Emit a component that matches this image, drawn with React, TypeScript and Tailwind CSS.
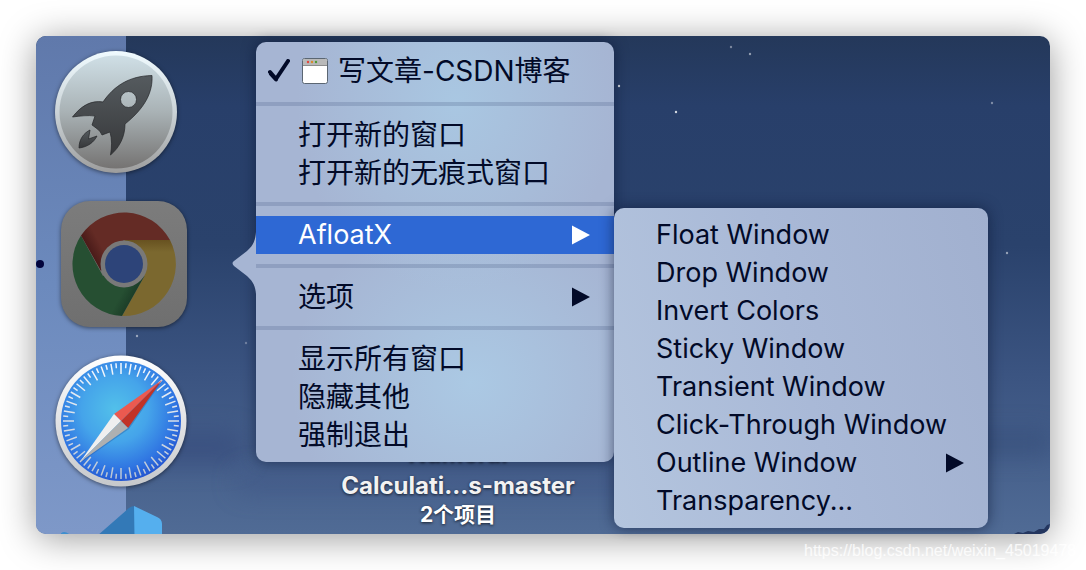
import type { ReactNode } from "react";

type Item = { label: string; submenu?: boolean; active?: boolean };

const groups: Item[][] = [
  [{ label: "打开新的窗口" }, { label: "打开新的无痕式窗口" }],
  [{ label: "AfloatX", submenu: true, active: true }],
  [{ label: "选项", submenu: true }],
  [{ label: "显示所有窗口" }, { label: "隐藏其他" }, { label: "强制退出" }],
];

const afloatItems: Item[] = [
  { label: "Float Window" },
  { label: "Drop Window" },
  { label: "Invert Colors" },
  { label: "Sticky Window" },
  { label: "Transient Window" },
  { label: "Click-Through Window" },
  { label: "Outline Window", submenu: true },
  { label: "Transparency..." },
];

function MenuItem({ label, submenu, active }: Item) {
  return (
    <button
      type="button"
      role="menuitem"
      aria-haspopup={submenu ? "menu" : undefined}
      className={
        "flex h-[38px] w-full items-center justify-between pl-[42px] pr-6 text-left whitespace-nowrap " +
        (active ? "bg-[#2e68d4] text-[27px] text-white" : "text-[#020a28]")
      }
    >
      {label}
      {submenu && (
        <svg viewBox="0 0 18 20" className="h-5 w-[18px]" fill="currentColor" aria-hidden="true">
          <path d="M0 .5 18 10 0 19.5Z" />
        </svg>
      )}
    </button>
  );
}

function Separator() {
  return <div role="separator" className="my-[10px] h-1 bg-[#4b6088]/25" />;
}

function DockItem({ label, className, children }: { label: string; className: string; children: ReactNode }) {
  return (
    <button type="button" aria-label={label} className={"block shrink-0 " + className}>
      {children}
    </button>
  );
}

function LaunchpadIcon() {
  return (
    <svg viewBox="0 0 124 124" className="size-[124px] drop-shadow-[0_1px_2px_rgba(0,0,0,0.5)]" aria-hidden="true">
      <defs>
        <linearGradient id="lpRim" x1="0" y1="0" x2="0" y2="1">
          <stop offset="0" stopColor="#f0fbff" />
          <stop offset=".5" stopColor="#cbd3d7" />
          <stop offset="1" stopColor="#9d9d9d" />
        </linearGradient>
        <linearGradient id="lpFace" x1="0" y1="0" x2="0" y2="1">
          <stop offset="0" stopColor="#cfdfe6" />
          <stop offset=".5" stopColor="#a9b2b5" />
          <stop offset="1" stopColor="#757372" />
        </linearGradient>
        <linearGradient id="lpRocket" x1="0" y1="0" x2="0" y2="1">
          <stop offset="0" stopColor="#555b5f" />
          <stop offset="1" stopColor="#37383a" />
        </linearGradient>
      </defs>
      <circle cx="62" cy="62" r="61" fill="url(#lpRim)" />
      <circle cx="62" cy="62" r="56.500" fill="url(#lpFace)" />
      <path
        fill="url(#lpRocket)"
        fillRule="evenodd"
        stroke="#252629"
        strokeWidth=".7"
        strokeLinejoin="round"
        d="M98 25.500C99 42 91 58 71 74C71 86 66 97 56.500 105C58 97 58 89 56 82L48 85C46 80 42 78 38 75L41 66C34 65 26 66 18.500 67C27 56 37 50 49 52C60 36 75 26 98 25.500ZM74.500 41.500A8 8 0 1 0 74.500 57.500A8 8 0 1 0 74.500 41.500Z"
      />
      <path fill="url(#lpRocket)" stroke="#252629" strokeWidth=".7" d="M36 80C30 83 25 89 25 98C34 97 40 92 43 86L34.500 89Z" />
    </svg>
  );
}

function ChromeIcon() {
  return (
    <svg viewBox="0 0 126 126" className="size-[126px] drop-shadow-[0_1px_2px_rgba(0,0,0,0.5)]" aria-hidden="true">
      <defs>
        <linearGradient id="crTile" x1="0" y1="0" x2="0" y2="1">
          <stop offset="0" stopColor="#7c7c7c" />
          <stop offset="1" stopColor="#6f6f6f" />
        </linearGradient>
        <linearGradient id="crRed" gradientUnits="userSpaceOnUse" x1="31" y1="54" x2="42" y2="48">
          <stop offset="0" stopColor="#4a1b19" />
          <stop offset="1" stopColor="#642b25" />
        </linearGradient>
        <linearGradient id="crYellow" gradientUnits="userSpaceOnUse" x1="86" y1="38" x2="86" y2="51">
          <stop offset="0" stopColor="#66501f" />
          <stop offset="1" stopColor="#7b682f" />
        </linearGradient>
        <linearGradient id="crGreen" gradientUnits="userSpaceOnUse" x1="73" y1="96" x2="62" y2="90">
          <stop offset="0" stopColor="#1b3c27" />
          <stop offset="1" stopColor="#264f32" />
        </linearGradient>
      </defs>
      <rect width="126" height="126" rx="29" fill="url(#crTile)" />
      <path d="M63 39H109A52 52 0 0 1 61 115L83.500 75Z" fill="url(#crYellow)" />
      <path d="M20 34.500A52 52 0 0 0 61 115L83.500 75L63 63L42 75Z" fill="url(#crGreen)" />
      <path d="M20 34.500A52 52 0 0 1 109 39H63L40 70Z" fill="url(#crRed)" />
      <circle cx="63" cy="63" r="23.500" fill="#797979" />
      <circle cx="63" cy="63" r="19" fill="#2d4479" />
    </svg>
  );
}

function SafariIcon() {
  const ticks = Array.from({ length: 72 }, (_, i) => i);
  return (
    <svg viewBox="0 0 132 132" className="size-[132px] drop-shadow-[0_1px_2px_rgba(0,0,0,0.5)]" aria-hidden="true">
      <defs>
        <linearGradient id="sfRim" x1="0" y1="0" x2="0" y2="1">
          <stop offset="0" stopColor="#ffffff" />
          <stop offset="1" stopColor="#c6c8cb" />
        </linearGradient>
        <radialGradient id="sfFace" cx=".45" cy=".4" r=".62">
          <stop offset="0" stopColor="#52c0ea" />
          <stop offset=".45" stopColor="#45a4ea" />
          <stop offset=".8" stopColor="#3076e2" />
          <stop offset="1" stopColor="#2454cf" />
        </radialGradient>
        <linearGradient id="sfTicks" gradientUnits="userSpaceOnUse" x1="0" y1="8" x2="0" y2="124">
          <stop offset="0" stopColor="#f4f9ff" />
          <stop offset="1" stopColor="#b9c5d4" />
        </linearGradient>
      </defs>
      <circle cx="66" cy="66" r="65.500" fill="url(#sfRim)" />
      <circle cx="66" cy="66" r="60" fill="url(#sfFace)" />
      <path
        stroke="url(#sfTicks)"
        strokeWidth="1.500"
        d={ticks
          .map((i) => {
            const angle = (i * Math.PI) / 36;
            const inner = i % 2 === 0 ? 47 : 53;
            const x = Math.sin(angle);
            const y = Math.cos(angle);
            return `M${66 + x * 58} ${66 + y * 58}L${66 + x * inner} ${66 + y * inner}`;
          })
          .join("")}
      />
      <path d="M108 25 74 74 25 108Z" fill="#173f8c" opacity=".3" />
      <path d="M107 25 59 59 66 66Z" fill="#eb5a50" />
      <path d="M107 25 66 66 73 73Z" fill="#c13327" />
      <path d="M25 107 59 59 66 66Z" fill="#efefef" />
      <path d="M25 107 66 66 73 73Z" fill="#aeb0b1" />
    </svg>
  );
}

function CodeIcon() {
  return (
    <svg viewBox="0 0 126 126" className="size-[126px]" aria-hidden="true">
      <path d="M-1 28Q3 24 8 28L62 65 40 70Z" fill="#3f8fce" />
      <path d="M36 30 68 2Q72-1 74 1V60L36 60Z" fill="#3379b7" />
      <path d="M73 0 96 11Q101 13 101 18V60H74Z" fill="#55afee" />
    </svg>
  );
}

function WindowIcon() {
  return (
    <svg viewBox="0 0 26 26" className="size-[26px] shrink-0" aria-hidden="true">
      <rect x=".5" y=".5" width="25" height="25" rx="2" fill="#fff" stroke="#5b6672" />
      <path d="M1 8V2.500Q1 1 2.500 1H23.500Q25 1 25 2.500V8Z" fill="#b9b9b9" />
      <path d="M1 7.500H25" stroke="#8d8d8d" />
      <circle cx="6" cy="4" r="1.200" fill="#e2463d" />
      <circle cx="10" cy="4" r="1.200" fill="#d98a2b" />
      <circle cx="14" cy="4" r="1.200" fill="#4e9a35" />
    </svg>
  );
}

function Stars() {
  const stars = [
    [583, 50, 0.8],
    [640, 76, 0.8],
    [695, 11, 0.4],
    [714, 18, 0.5],
    [956, 67, 0.4],
    [971, 217, 0.5],
    [101, 300, 0.5],
    [210, 307, 0.3],
  ];
  return (
    <svg className="pointer-events-none absolute inset-0 size-full" aria-hidden="true">
      {stars.map(([x, y, opacity]) => (
        <circle key={x} cx={x} cy={y} r="1.200" fill="#fff" opacity={opacity} />
      ))}
    </svg>
  );
}

function Wallpaper() {
  return (
    <div className="absolute inset-0 bg-[linear-gradient(to_bottom,#24385a,#283f6a_14%,#2a426c_42%,#3b5481_68%,#506b95)]" aria-hidden="true">
      <div className="absolute right-0 top-[395px] h-6 w-[200px] bg-[#2b416f]/40 blur-md" />
      <div className="absolute top-[396px] left-[80px] h-8 w-[130px] rounded-full bg-[#34487a]/60 blur-md" />
      <div className="absolute top-[436px] left-[200px] h-5 w-[420px] rounded-full bg-[#3b5284]/50 blur-md" />
      <Stars />
      <svg viewBox="0 0 40 10" className="absolute right-0 bottom-0 h-[10px] w-10">
        <path d="M4 10 8 8 13 9 18 7 24 8 29 5 34 5 37 1 40 0V10Z" fill="#24365f" />
      </svg>
    </div>
  );
}

export default function App() {
  return (
    <main className="relative flex min-h-screen overflow-hidden bg-white p-9 font-[Inter,'Noto_Sans_CJK_SC',sans-serif]">
      <section
        aria-label="Desktop"
        className="relative min-h-[498px] flex-1 rounded-[10px] shadow-[0_4px_36px_rgba(0,0,0,0.4)]"
      >
        <div className="absolute inset-0 flex overflow-hidden rounded-[10px]">
          <Wallpaper />
          <nav aria-label="Dock" className="relative flex w-[90px] flex-col bg-linear-to-b from-[#6079ab] via-[#6c8abd] via-50% to-[#7e98c8]">
            <DockItem label="Launchpad" className="mt-[14px] ml-[18px]">
              <LaunchpadIcon />
            </DockItem>
            <div className="mt-[27px] flex shrink-0 items-center">
              <span className="size-2 shrink-0 rounded-full bg-[#03053c]" />
              <DockItem label="Google Chrome" className="ml-[17px]">
                <ChromeIcon />
              </DockItem>
            </div>
            <DockItem label="Safari" className="mt-7 ml-[19px]">
              <SafariIcon />
            </DockItem>
            <DockItem label="Visual Studio Code" className="mt-[19px] ml-[25px]">
              <CodeIcon />
            </DockItem>
          </nav>

          <figure className="absolute top-[404px] left-[292px] w-[260px] text-center font-bold text-white [text-shadow:0_1px_3px_rgba(0,0,0,0.7)]">
            <div className="h-8 text-2xl leading-7 text-[#2b3654]">Numeral</div>
            <div className="text-2xl leading-7 text-[#f2f2f2]">Calculati...s-master</div>
            <figcaption className="text-[21px] leading-[30px]">2个项目</figcaption>
          </figure>
        </div>

        <div
          role="menu"
          aria-label="Google Chrome"
          className="absolute top-[6px] left-[220px] w-[358px] rounded-[10px] bg-[#a6b5d3] bg-[radial-gradient(ellipse_160px_190px_at_200px_60px,#a9c7e2,transparent),radial-gradient(ellipse_180px_170px_at_215px_340px,#abc9e4,transparent)] py-2 text-[28px] leading-[38px] shadow-[0_0_14px_rgba(10,20,50,0.6)]"
        >
          <svg viewBox="0 0 24 62" className="absolute top-[190px] -left-6 h-[62px] w-6" aria-hidden="true">
            <path d="M24 0C23 12 19 15 15 19L2 29Q-1 31 2 34L15 44C19 48 23 51 24 62Z" fill="#a6b5d3" />
          </svg>
          <button
            type="button"
            role="menuitemcheckbox"
            aria-checked="true"
            className="flex h-[42px] w-full items-center pl-3 text-left whitespace-nowrap text-[#020a28]"
          >
            <svg viewBox="0 0 22 24" className="mr-3 h-6 w-[22px] shrink-0" fill="none" stroke="currentColor" strokeWidth="4" strokeLinecap="round" strokeLinejoin="round" aria-hidden="true">
              <path d="M2 13 8 20 20 2M3 15 8 20.500" />
            </svg>
            <WindowIcon />
            <span className="ml-[10px]">写文章-CSDN博客</span>
          </button>
          {groups.map((group) => (
            <div key={group[0].label} role="group">
              <Separator />
              {group.map((item) => (
                <MenuItem key={item.label} {...item} />
              ))}
            </div>
          ))}
        </div>

        <div
          role="menu"
          aria-label="AfloatX"
          className="absolute top-[172px] left-[578px] w-[374px] rounded-[10px] bg-[linear-gradient(75deg,#b4c5de,#a9b9d7_50%,#a1b0cf)] py-2 text-[27px] leading-[38px] shadow-[0_0_14px_rgba(10,20,50,0.6)]"
        >
          {afloatItems.map((item) => (
            <MenuItem key={item.label} {...item} />
          ))}
        </div>
      </section>

      <p className="absolute right-0 bottom-[8px] w-[282px] text-base leading-[22px] whitespace-nowrap text-white/80 font-['Liberation_Sans',sans-serif]">
        https://blog.csdn.net/weixin_45019478
      </p>
    </main>
  );
}
